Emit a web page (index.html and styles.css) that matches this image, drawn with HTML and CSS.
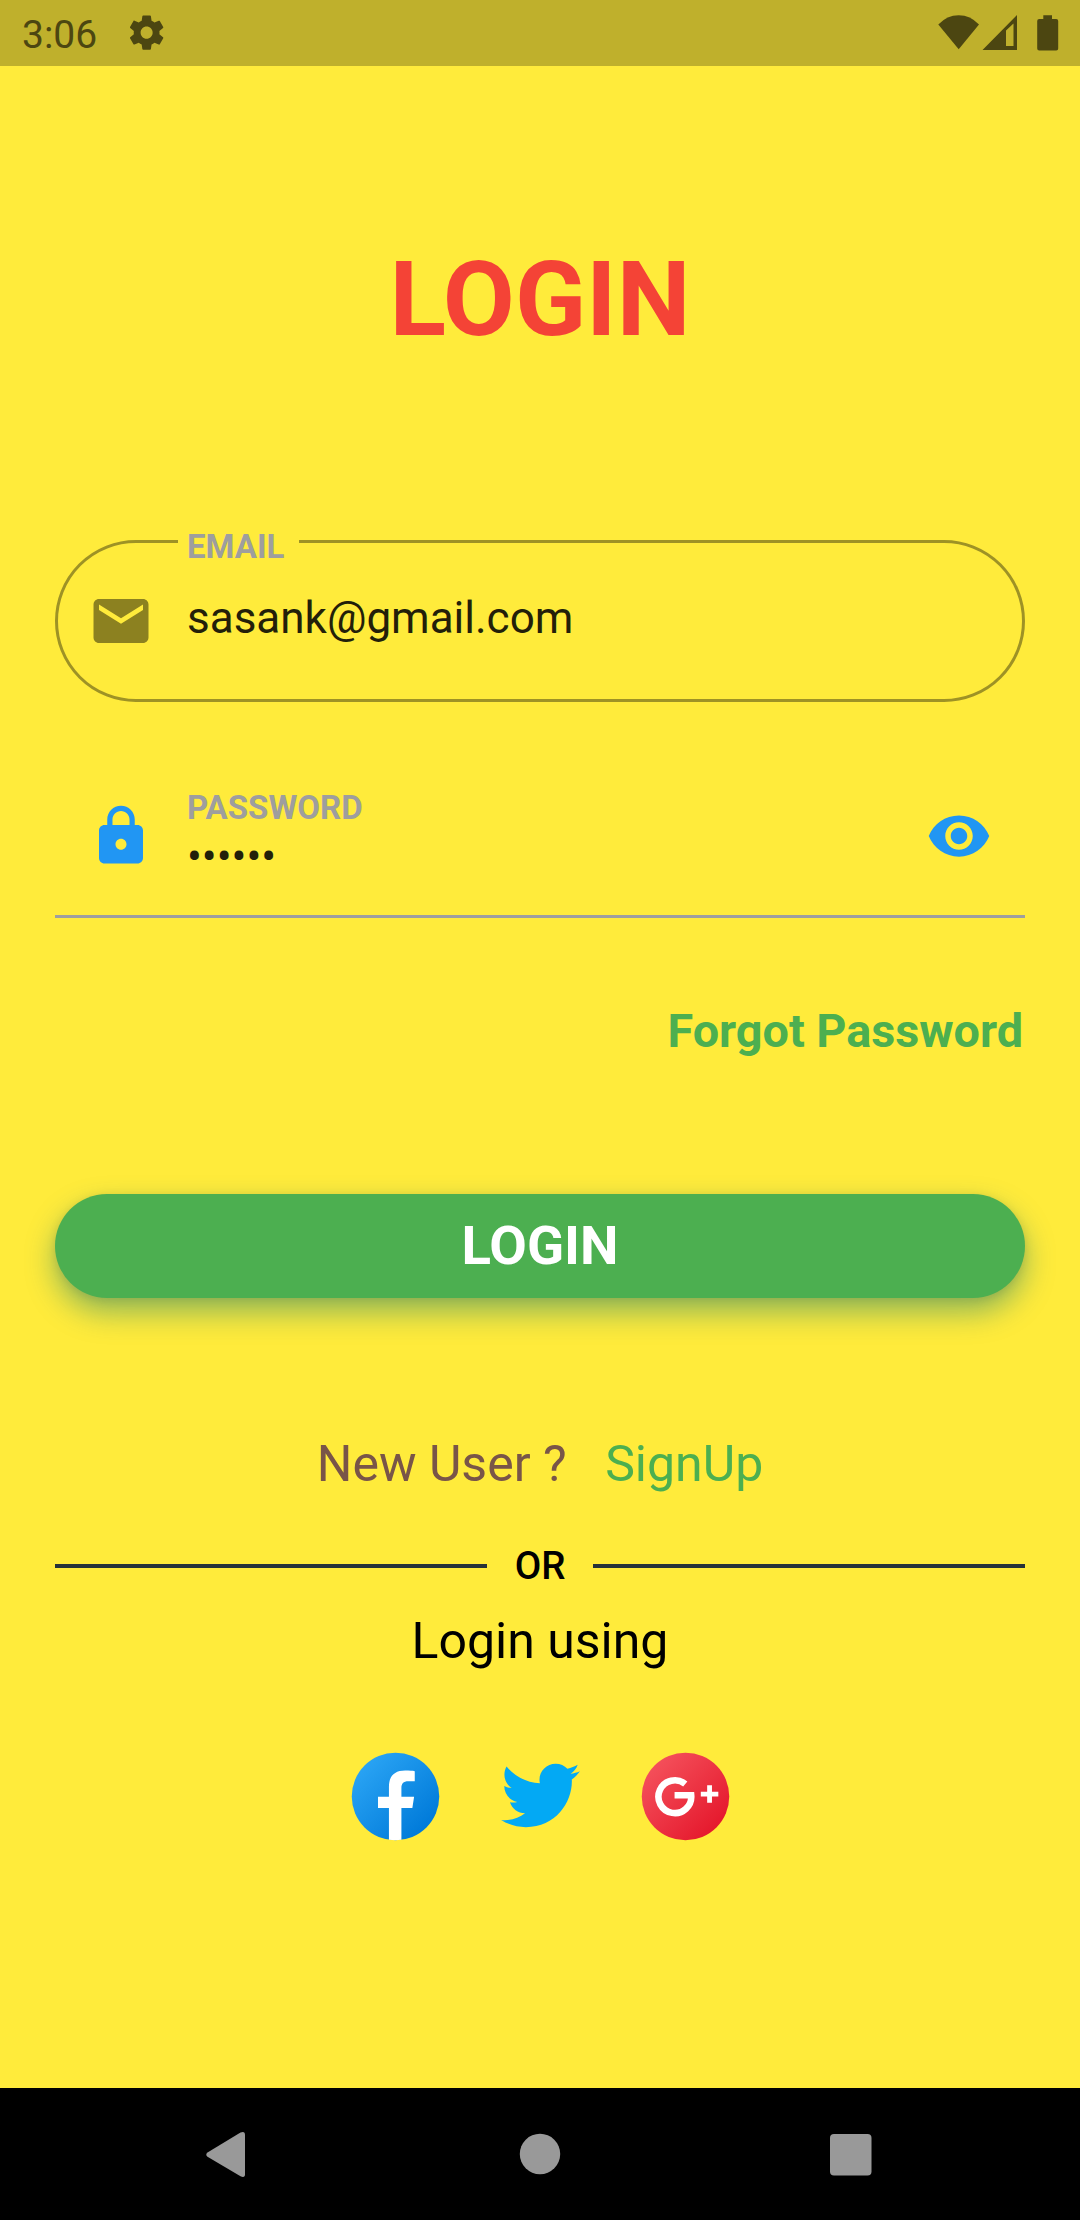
FILE: index.html
```html
<!DOCTYPE html>
<html lang="en">
<head>
<meta charset="utf-8">
<title>Login</title>
<link rel="stylesheet" href="styles.css">
</head>
<body>
<header class="status">
  <span class="clock">3:06</span>
  <svg class="gear" viewBox="0 0 24 24"><path d="M19.43 12.98c.04-.32.07-.64.07-.98s-.03-.66-.07-.98l2.11-1.65c.19-.15.24-.42.12-.64l-2-3.46c-.12-.22-.39-.3-.61-.22l-2.49 1c-.52-.4-1.08-.73-1.69-.98l-.38-2.65C14.46 2.18 14.25 2 14 2h-4c-.25 0-.46.18-.49.42l-.38 2.65c-.61.25-1.17.59-1.69.98l-2.49-1c-.23-.09-.49 0-.61.22l-2 3.46c-.13.22-.07.49.12.64l2.11 1.65c-.04.32-.07.65-.07.98s.03.66.07.98l-2.11 1.65c-.19.15-.24.42-.12.64l2 3.46c.12.22.39.3.61.22l2.49-1c.52.4 1.08.73 1.69.98l.38 2.65c.03.24.24.42.49.42h4c.25 0 .46-.18.49-.42l.38-2.65c.61-.25 1.17-.59 1.69-.98l2.49 1c.23.09.49 0 .61-.22l2-3.46c.12-.22.07-.49-.12-.64l-2.11-1.65zM12 15.5c-1.93 0-3.5-1.57-3.5-3.5s1.57-3.5 3.5-3.5 3.5 1.57 3.5 3.5-1.57 3.5-3.5 3.5z"/></svg>
  <svg class="indicators" viewBox="0 0 122 66">
    <path d="M.3 24.5Q9 15.2 20.7 15.2T41 24.5L20.7 49.3z"/>
    <path fill-rule="evenodd" d="M44.5 50L79 15v35zM68 30.500V46h7.500V23.500z"/>
    <path d="M105.300 15.300h8.700V19h4.200q2 0 2 2v27.500q0 2-2 2h-17q-2 0-2-2V21q0-2 2-2h4.100z"/>
  </svg>
</header>
<main class="screen">
  <h1 class="title">LOGIN</h1>
  <fieldset class="email">
    <legend class="label">EMAIL</legend>
    <div class="email-row">
      <svg class="icon" viewBox="0 0 24 24"><path d="M20 4H4c-1.100 0-1.990.9-1.990 2L2 18c0 1.100.9 2 2 2h16c1.100 0 2-.9 2-2V6c0-1.100-.9-2-2-2zm0 4l-8 5-8-5V6l8 5 8-5v2z"/></svg>
      <span class="value">sasank@gmail.com</span>
    </div>
  </fieldset>
  <div class="password">
    <svg class="icon blue" viewBox="0 0 24 24"><path d="M18 8h-1V6c0-2.760-2.240-5-5-5S7 3.240 7 6v2H6c-1.100 0-2 .9-2 2v10c0 1.100.9 2 2 2h12c1.100 0 2-.9 2-2V10c0-1.100-.9-2-2-2zm-6 9c-1.100 0-2-.9-2-2s.9-2 2-2 2 .9 2 2-.9 2-2 2zm3.100-9H8.900V6c0-1.710 1.390-3.100 3.100-3.100s3.100 1.390 3.100 3.100v2z"/></svg>
    <div class="password-text">
      <span class="label">PASSWORD</span>
      <span class="value dots">••••••</span>
    </div>
    <svg class="icon blue" viewBox="0 0 24 24"><path d="M12 4.500C7 4.500 2.730 7.610 1 12c1.730 4.390 6 7.500 11 7.500s9.270-3.110 11-7.500c-1.730-4.390-6-7.500-11-7.500zM12 17c-2.760 0-5-2.240-5-5s2.240-5 5-5 5 2.240 5 5-2.240 5-5 5zm0-8c-1.660 0-3 1.340-3 3s1.340 3 3 3 3-1.340 3-3-1.340-3-3-3z"/></svg>
  </div>
  <a class="forgot">Forgot Password</a>
  <button class="submit">LOGIN</button>
  <p class="signup"><span>New User ?</span><a class="signup-link">SignUp</a></p>
  <div class="divider"><i class="rule"></i><span class="or">OR</span><i class="rule"></i></div>
  <p class="using">Login using</p>
  <div class="social">
    <svg class="brand" viewBox="0 0 48 48">
      <defs><linearGradient id="fb" x1="0.120" y1="0.120" x2="0.860" y2="0.860"><stop offset="0" stop-color="#2aa4f4"/><stop offset="1" stop-color="#007ad9"/></linearGradient></defs>
      <circle cx="24" cy="24" r="20" fill="url(#fb)"/>
      <path fill="#fff" d="M21 43.800V29.300h-5v-5.200h5v-4.600c0-4.900 2.600-7.400 7.400-7.400 2 0 3.500.1 4.400.3v4.600h-2.900c-2.400 0-3.200 1.100-3.200 3.100v4h5.800l-.8 5.200h-5v14.500c-1.800.3-3.900.3-5.700 0z"/>
    </svg>
    <svg class="brand" viewBox="0 0 48 48"><path fill="#03a9f4" d="M42,12.429c-1.323,0.586-2.746,0.977-4.247,1.162c1.526-0.906,2.700-2.351,3.251-4.058c-1.428,0.837-3.010,1.452-4.693,1.776C34.967,9.884,33.050,9,30.926,9c-4.080,0-7.387,3.278-7.387,7.320c0,0.572,0.067,1.129,0.193,1.670c-6.138-0.308-11.582-3.226-15.224-7.654c-0.640,1.082-1,2.349-1,3.686c0,2.541,1.301,4.778,3.285,6.096c-1.211-0.037-2.351-0.374-3.349-0.914c0,0.022,0,0.055,0,0.086c0,3.551,2.547,6.508,5.923,7.181c-0.617,0.169-1.269,0.263-1.941,0.263c-0.477,0-0.942-0.054-1.392-0.135c0.940,2.902,3.667,5.023,6.898,5.086c-2.528,1.960-5.712,3.134-9.174,3.134c-0.598,0-1.183-0.034-1.761-0.104C9.268,36.786,13.152,38,17.321,38c13.585,0,21.017-11.156,21.017-20.834c0-0.317-0.010-0.633-0.025-0.945C39.763,15.197,41.013,13.905,42,12.429"/></svg>
    <svg class="brand" viewBox="0 0 48 48">
      <defs><linearGradient id="gp" x1="0.140" y1="0.140" x2="0.860" y2="0.860"><stop offset="0" stop-color="#f44f5a"/><stop offset="1" stop-color="#e5192d"/></linearGradient></defs>
      <circle cx="24" cy="24" r="20" fill="url(#gp)"/>
      <g class="gplus"><path d="M23.900 18.300A7.500 7.500 0 1 0 26.600 23.400H19"/><path d="M35 18.900v8M31 22.900h8"/></g>
    </svg>
  </div>
</main>
<nav class="navbar">
  <svg class="nav-icons" viewBox="0 0 1080 132">
    <path d="M207.500 64.500L240.500 44.600Q245 42.800 245 47V86.200Q245 90.300 240.500 88.300L207.500 68.800Q205 66.700 207.500 64.500z"/>
    <circle cx="540" cy="66" r="20.200"/>
    <rect x="830" y="46" width="41.500" height="41.500" rx="4"/>
  </svg>
</nav>
</body>
</html>
```
FILE: styles.css
```css
* { box-sizing: border-box; }
body {
  margin: 0;
  width: 1080px;
  height: 2220px;
  display: flex;
  flex-direction: column;
  background: #ffeb3b;
  font-family: Roboto, "Liberation Sans", sans-serif;
  overflow: hidden;
}
svg { display: block; flex: none; }
.status {
  height: 66px;
  flex: none;
  display: flex;
  align-items: center;
  padding: 0 20px 0 22px;
  background: #bfb02c;
  color: #4c4611;
  fill: #4c4611;
}
.clock { width: 104px; font-size: 39px; line-height: 66px; padding-top: 3px; }
.gear { width: 41.25px; height: 41.25px; }
.indicators { width: 122px; height: 66px; margin-left: auto; }

.screen {
  flex: 1;
  display: flex;
  flex-direction: column;
  padding: 173px 55px 0;
}
.title {
  margin: 0;
  font-size: 104.5px;
  line-height: 122px;
  font-weight: 700;
  text-align: center;
  color: #f44336;
}
.email {
  margin: 160px 0 0;
  padding: 0 33px;
  height: 181px;
  min-width: 0;
  border: 3px solid #9e9225;
  border-radius: 82px;
}
.label { font-size: 33px; font-weight: 700; color: #9e9e9e; }
.email .label {
  width: 121px;
  margin-left: 87px;
  padding: 11px 0 0 9px;
  line-height: 30px;
}
.email-row { display: flex; gap: 33px; padding-top: 26px; margin-left: -3px; }
.icon { width: 66px; height: 66px; fill: #8c8120; }
.blue { fill: #2196f3; }
.value { font-size: 44px; line-height: 52px; color: #231f09; }
.email .value { padding-top: 4px; }
.password {
  display: flex;
  align-items: flex-start;
  gap: 33px;
  height: 130px;
  margin-top: 86px;
  padding: 0 33px;
  border-bottom: 3px solid #9e9e9e;
}
.password .icon { margin-top: 15px; }
.password-text { flex: 1; display: flex; flex-direction: column; }
.password .label { line-height: 39px; }
.dots { margin-top: 4px; }
.forgot {
  align-self: flex-end;
  margin: 86px 2px 0 0;
  font-size: 46.75px;
  line-height: 54px;
  font-weight: 700;
  color: #4caf50;
}
.submit {
  margin: 136px 0 0;
  padding: 0 0 2px;
  height: 104px;
  flex: none;
  border: 0;
  border-radius: 52px;
  background: #4caf50;
  color: #fff;
  font: 700 54.5px/102px Roboto, "Liberation Sans", sans-serif;
  box-shadow: 0 14px 30px rgba(0, 115, 125, 0.45), 0 2px 10px rgba(0, 0, 0, 0.1);
}
.signup {
  display: flex;
  justify-content: center;
  gap: 38.5px;
  margin: 137px 0 0;
  font-size: 50px;
  line-height: 58px;
  color: #795548;
}
.signup-link { color: #4caf50; }
.divider { display: flex; align-items: center; gap: 27.5px; margin-top: 51px; }
.rule { flex: 1; height: 4px; background: #263238; }
.or { font-size: 38.5px; line-height: 44px; font-weight: 500; color: #000; }
.using { margin: 24px 0 0; font-size: 50px; line-height: 58px; text-align: center; color: #000; }
.social { display: flex; justify-content: center; gap: 40px; margin-top: 74px; }
.brand { width: 105px; height: 105px; }
.gplus { fill: none; stroke: #fff; stroke-width: 3; }
.gplus path:last-child { stroke-width: 2.200; }

.navbar { height: 132px; flex: none; background: #000; fill: #999; }
.nav-icons { width: 1080px; height: 132px; }
```
